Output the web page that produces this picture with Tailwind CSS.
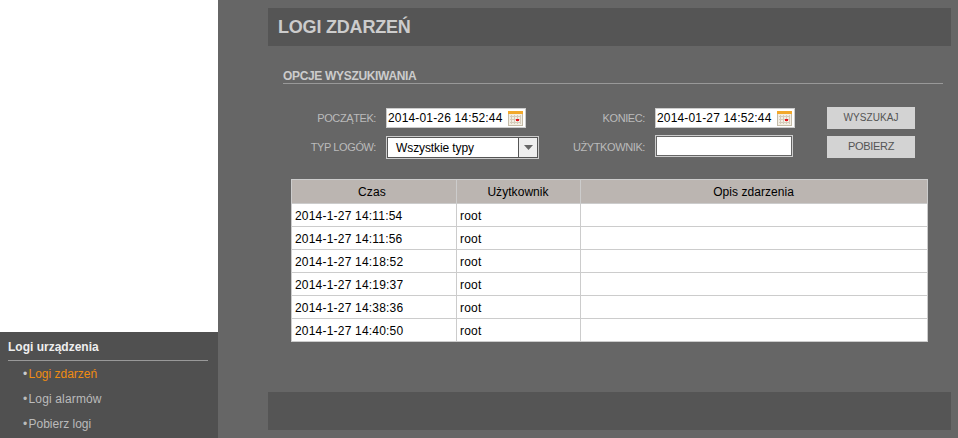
<!DOCTYPE html>
<html lang="pl">
<head>
  <meta charset="UTF-8" />
  <title>Logi zdarzeń</title>
  <script src="https://cdn.jsdelivr.net/npm/@tailwindcss/browser@4"></script>
</head>
<body class="bg-[#666666] font-['Liberation_Sans',Arial,sans-serif] overflow-hidden">
  <div class="flex h-[438px] w-[958px]">
    <!-- lewe menu -->
    <aside class="w-[218px] shrink-0 flex flex-col bg-white">
      <div class="mt-auto h-[106px] bg-[#505050] pl-2 pr-[10px]">
        <div class="h-[29px] pt-[8px] text-[12px] leading-[15px] font-bold text-[#eeeeee] border-b border-[#999999]">Logi urządzenia</div>
        <ul class="text-[12px] pl-[15px] text-[#bbbbbb]">
          <li class="h-[25px] pt-[6px] leading-[15px] flex"><span class="w-[5.5px] text-[#cccccc]">•</span><span class="text-[#f08c10]">Logi zdarzeń</span></li>
          <li class="h-[25px] pt-[6px] leading-[15px] flex"><span class="w-[5.5px]">•</span><span class="tracking-[0.15px]">Logi alarmów</span></li>
          <li class="h-[25px] pt-[6px] leading-[15px] flex"><span class="w-[5.5px]">•</span><span>Pobierz logi</span></li>
        </ul>
      </div>
    </aside>

    <!-- tresc -->
    <main class="w-[683px] ml-[50px] pt-2">
      <div class="h-[38px] bg-[#555555] pl-[10px] text-[18px] leading-[39px] tracking-[-0.2px] font-bold text-[#cccccc]">LOGI ZDARZEŃ</div>

      <div class="ml-[15px] mr-2 mt-[22px] h-[16px] border-b border-[#999999] pt-px text-[12px] leading-[14px] tracking-[-0.33px] font-bold text-[#cccccc]">OPCJE WYSZUKIWANIA</div>

      <div class="mt-[23px] ml-[23px] grid grid-cols-[95px_140px_129px_140px_32px_88px] grid-rows-[22px_22px] gap-y-[7px] text-[11px] tracking-[-0.4px] text-[#bbbbbb]">
        <div class="text-right pr-[10px] leading-[22px]">POCZĄTEK:</div>
        <div class="h-[20px] mt-px bg-white border border-[#cccccc] flex items-center pl-[1px] pr-[2px] justify-between">
          <span class="text-[12px] tracking-[0.16px] text-black whitespace-nowrap">2014-01-26 14:52:44</span>
          <svg width="15" height="15" viewBox="0 0 15 15"><rect x=".5" y=".5" width="14" height="14" fill="#f3eee3" stroke="#c4bba8"/><rect x="0" y="0" width="15" height="3" fill="#f2a92c"/><path d="M2 5.500h11M2 8.500h11M2 11.500h11M3.500 4v9M6.500 4v9M9.500 4v9M12.500 4v9" stroke="#d5ccba" fill="none"/><rect x="8" y="8" width="3" height="2" fill="#e8101c"/></svg>
        </div>
        <div class="text-right pr-[10px] leading-[22px]">KONIEC:</div>
        <div class="h-[20px] mt-px bg-white border border-[#cccccc] flex items-center pl-[1px] pr-[2px] justify-between">
          <span class="text-[12px] tracking-[0.16px] text-black whitespace-nowrap">2014-01-27 14:52:44</span>
          <svg width="15" height="15" viewBox="0 0 15 15"><rect x=".5" y=".5" width="14" height="14" fill="#f3eee3" stroke="#c4bba8"/><rect x="0" y="0" width="15" height="3" fill="#f2a92c"/><path d="M2 5.500h11M2 8.500h11M2 11.500h11M3.500 4v9M6.500 4v9M9.500 4v9M12.500 4v9" stroke="#d5ccba" fill="none"/><rect x="8" y="8" width="3" height="2" fill="#e8101c"/></svg>
        </div>
        <div></div>
        <button class="bg-[#d3d3d3] text-[#555555] text-[10px] tracking-[0.1px] pb-px">WYSZUKAJ</button>

        <div class="text-right pr-[10px] leading-[23px]">TYP LOGÓW:</div>
        <div class="w-[153px] h-[23px] border border-[#cccccc] bg-[#555555] p-px flex">
          <div class="flex-1 bg-white text-[12px] tracking-[-0.1px] text-black pl-[8px] leading-[20px]">Wszystkie typy</div>
          <div class="w-[18px] ml-px bg-[#eeeeee] flex items-center justify-center">
            <svg width="9" height="5" viewBox="0 0 9 5"><path d="M0 0h9L4.500 5z" fill="#666666"/></svg>
          </div>
        </div>
        <div class="text-right pr-[10px] leading-[23px]">UŻYTKOWNIK:</div>
        <input class="w-[138px] h-[22px] -mt-px bg-white border border-[#cccccc] outline outline-1 -outline-offset-2 outline-[#666666]" type="text" />
        <div></div>
        <button class="bg-[#d3d3d3] text-[#555555] text-[11px] tracking-[-0.3px] pb-px">POBIERZ</button>
      </div>

      <table class="mt-[21px] ml-[23px] w-[637px] table-fixed border-collapse bg-white text-[12px] tracking-[0.2px] text-black [&_td]:pt-[2px]">
        <thead>
          <tr class="h-[24px] bg-[#bbb5b1]">
            <th class="w-[165px] border border-[#cccccc] font-normal pr-[4px]">Czas</th>
            <th class="w-[124px] border border-[#cccccc] font-normal tracking-[0.05px] pr-px">Użytkownik</th>
            <th class="border border-[#cccccc] font-normal tracking-[0.05px] pr-px">Opis zdarzenia</th>
          </tr>
        </thead>
        <tbody>
          <tr class="h-[23px]"><td class="border border-[#cccccc] pl-[3px]">2014-1-27 14:11:54</td><td class="border border-[#cccccc] pl-[3px]">root</td><td class="border border-[#cccccc]"></td></tr>
          <tr class="h-[23px]"><td class="border border-[#cccccc] pl-[3px]">2014-1-27 14:11:56</td><td class="border border-[#cccccc] pl-[3px]">root</td><td class="border border-[#cccccc]"></td></tr>
          <tr class="h-[23px]"><td class="border border-[#cccccc] pl-[3px]">2014-1-27 14:18:52</td><td class="border border-[#cccccc] pl-[3px]">root</td><td class="border border-[#cccccc]"></td></tr>
          <tr class="h-[23px]"><td class="border border-[#cccccc] pl-[3px]">2014-1-27 14:19:37</td><td class="border border-[#cccccc] pl-[3px]">root</td><td class="border border-[#cccccc]"></td></tr>
          <tr class="h-[23px]"><td class="border border-[#cccccc] pl-[3px]">2014-1-27 14:38:36</td><td class="border border-[#cccccc] pl-[3px]">root</td><td class="border border-[#cccccc]"></td></tr>
          <tr class="h-[23px]"><td class="border border-[#cccccc] pl-[3px]">2014-1-27 14:40:50</td><td class="border border-[#cccccc] pl-[3px]">root</td><td class="border border-[#cccccc]"></td></tr>
        </tbody>
      </table>

      <div class="mt-[50px] h-[38px] bg-[#555555]"></div>
    </main>
  </div>
</body>
</html>
